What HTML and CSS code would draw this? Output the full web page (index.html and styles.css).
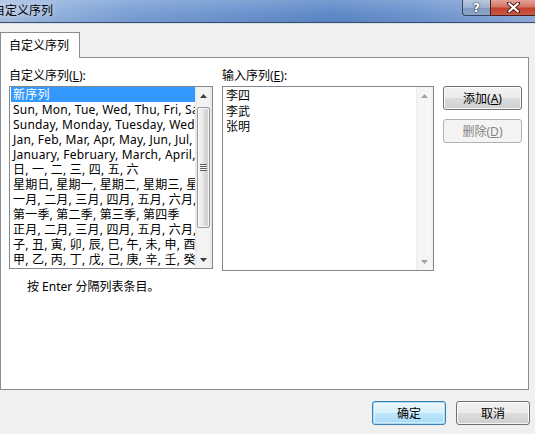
FILE: index.html
```html
<!DOCTYPE html>
<html lang="zh-CN">
<head>
<meta charset="utf-8">
<title>自定义序列</title>
<link rel="stylesheet" href="styles.css">
</head>
<body>
<div class="window">
  <div class="titlebar">
    <span class="title">自定义序列</span>
    <div class="capbtns">
      <div class="cap help">?</div>
      <div class="cap close">
        <svg width="13" height="11" viewBox="0 0 13 11"><path d="M1.5 1 L11.5 10 M11.5 1 L1.5 10" stroke="#4a1d16" stroke-width="4" stroke-linecap="square" fill="none"/><path d="M1.5 1 L11.5 10 M11.5 1 L1.5 10" stroke="#fff" stroke-width="2.2" fill="none"/></svg>
      </div>
    </div>
  </div>
  <div class="client">
    <div class="tabs"><div class="tab">自定义序列</div></div>
    <div class="panel">
      <div class="cols">
        <div class="col col-left">
          <div class="label">自定义序列(<u>L</u>):</div>
          <div class="listbox lb-left">
            <div class="items">
              <div class="item sel">新序列</div>
              <div class="item">Sun, Mon, Tue, Wed, Thu, Fri, Sat</div>
              <div class="item">Sunday, Monday, Tuesday, Wednesday, Thursday</div>
              <div class="item">Jan, Feb, Mar, Apr, May, Jun, Jul, Aug</div>
              <div class="item">January, February, March, April, May</div>
              <div class="item">日, 一, 二, 三, 四, 五, 六</div>
              <div class="item">星期日, 星期一, 星期二, 星期三, 星期四</div>
              <div class="item">一月, 二月, 三月, 四月, 五月, 六月, 七月</div>
              <div class="item">第一季, 第二季, 第三季, 第四季</div>
              <div class="item">正月, 二月, 三月, 四月, 五月, 六月, 七月</div>
              <div class="item">子, 丑, 寅, 卯, 辰, 巳, 午, 未, 申, 酉, 戌, 亥</div>
              <div class="item">甲, 乙, 丙, 丁, 戊, 己, 庚, 辛, 壬, 癸</div>
            </div>
            <div class="vscroll">
              <div class="arrow"><svg width="7" height="4" viewBox="0 0 7 4"><path d="M0 4 L3.5 0 L7 4 Z" fill="#3c3c3c"/></svg></div>
              <div class="track">
                <div class="thumb"><div class="grip"></div></div>
              </div>
              <div class="arrow"><svg width="7" height="4" viewBox="0 0 7 4"><path d="M0 0 L3.5 4 L7 0 Z" fill="#3c3c3c"/></svg></div>
            </div>
          </div>
          <div class="hint">按 Enter 分隔列表条目。</div>
        </div>
        <div class="col col-right">
          <div class="label">输入序列(<u>E</u>):</div>
          <div class="listbox lb-right">
            <div class="edittext">
              <div class="line">李四</div>
              <div class="line">李武</div>
              <div class="line">张明</div>
            </div>
            <div class="vscroll disabled">
              <div class="arrow"><svg width="7" height="4" viewBox="0 0 7 4"><path d="M0 4 L3.5 0 L7 4 Z" fill="#a3a3a3"/></svg></div>
              <div class="track"></div>
              <div class="arrow"><svg width="7" height="4" viewBox="0 0 7 4"><path d="M0 0 L3.5 4 L7 0 Z" fill="#a3a3a3"/></svg></div>
            </div>
          </div>
        </div>
        <div class="col col-btns">
          <div class="btn">添加(<u>A</u>)</div>
          <div class="btn disabled">删除(<u>D</u>)</div>
        </div>
      </div>
    </div>
    <div class="footer">
      <div class="btn default">确定</div>
      <div class="btn">取消</div>
    </div>
  </div>
</div>
</body>
</html>
```
FILE: styles.css
```css
* { box-sizing: border-box; }
html, body { margin: 0; padding: 0; }
body {
  width: 535px;
  height: 434px;
  overflow: hidden;
  background: #f0f0f0;
  color: #000;
  font-family: "Noto Sans", "Noto Sans CJK SC", sans-serif;
  font-size: 12px;
}
u { text-decoration: underline; text-underline-offset: 1px; }

.window {
  width: 535px;
  height: 434px;
  display: flex;
  flex-direction: column;
}

/* title bar */
.titlebar {
  height: 23px;
  flex: none;
  display: flex;
  align-items: flex-start;
  border-bottom: 1px solid #3a4f6c;
  background:
    linear-gradient(to bottom, rgba(255,255,255,0.18) 0%, rgba(255,255,255,0.05) 50%, rgba(0,0,0,0.03) 100%),
    linear-gradient(to right, #a7bfe2 0%, #8fafdc 10%, #779dd4 25%, #6891cd 45%, #5a86c6 62%, #6a92cd 78%, #7d9fd5 90%, #8eacda 100%);
}
.title {
  margin-left: -7px;
  padding-top: 3px;
  line-height: 16px;
  font-size: 12px;
  color: #000;
  text-shadow: 0 0 6px rgba(255,255,255,0.8);
}
.capbtns {
  margin-left: auto;
  display: flex;
  height: 16px;
}
.cap {
  height: 16px;
  display: flex;
  align-items: center;
  justify-content: center;
  border: 1px solid #33465f;
  border-top: none;
}
.help {
  width: 28px;
  border-radius: 0 0 0 4px;
  border-right: none;
  background: linear-gradient(to bottom, #b9c9df 0%, #9cb1cf 50%, #8099bd 51%, #8ea6c8 100%);
  color: #fff;
  font-family: "DejaVu Sans", sans-serif;
  font-weight: bold;
  font-size: 12px;
  line-height: 14px;
  text-shadow: 0 0 2px #1c2d44, 0 0 1px #1c2d44;
}
.close {
  width: 45px;
  border-right: none;
  border-color: #4a1f18;
  background: linear-gradient(to bottom, #e5a297 0%, #d47566 45%, #c2402d 55%, #c95b46 100%);
}

/* client */
.client {
  flex: 1;
  display: flex;
  flex-direction: column;
  border-top: 1px solid #d6dfea;
  padding-top: 8px;
}
.tabs {
  display: flex;
  height: 25px;
  flex: none;
}
.tab {
  position: relative;
  z-index: 1;
  width: 80px;
  height: 26px;
  border: 1px solid #898c95;
  border-bottom: none;
  background: #fff;
  padding: 5px 0 0 8px;
  line-height: 15px;
}
.panel {
  width: 529px;
  height: 333px;
  flex: none;
  border: 1px solid #898c95;
  background: #fff;
  padding: 10px 0 0 8px;
}
.cols {
  display: flex;
  gap: 9px;
  align-items: flex-start;
}
.col { display: flex; flex-direction: column; }
.col-left { width: 204px; }
.col-right { width: 212px; }
.col-btns { width: 79px; padding-top: 18px; gap: 9px; }

.label {
  line-height: 15px;
  height: 15px;
  margin-bottom: 3px;
  white-space: nowrap;
}

.listbox {
  display: flex;
  border: 1px solid #828790;
  background: #fff;
  overflow: hidden;
}
.lb-left { height: 183px; }
.lb-right { height: 185px; }

.items {
  flex: 1;
  min-width: 0;
  overflow: hidden;
  padding-left: 1px;
}
.item {
  height: 15px;
  line-height: 15px;
  padding-left: 2px;
  white-space: nowrap;
  overflow: hidden;
  letter-spacing: 0.2px;
}
.item.sel {
  background: #3399ff;
  color: #fff;
}

.edittext {
  flex: 1;
  padding: 1px 0 0 3px;
}
.line { line-height: 15.5px; height: 15.5px; }

/* scrollbars */
.vscroll {
  width: 17px;
  flex: none;
  display: flex;
  flex-direction: column;
  background: linear-gradient(to right, #e4e4e4 0%, #f2f2f2 15%, #f4f4f4 50%, #f2f2f2 85%, #e6e6e6 100%);
}
.vscroll.disabled {
  background: linear-gradient(to right, #ececec 0%, #f5f5f5 15%, #f6f6f6 85%, #ededed 100%);
}
.arrow {
  height: 17px;
  flex: none;
  display: flex;
  align-items: center;
  justify-content: center;
}
.track {
  flex: 1;
  display: flex;
  flex-direction: column;
}
.thumb {
  margin: 3px 2px 0 2px;
  height: 121px;
  border: 1px solid #979797;
  border-radius: 2px;
  background: linear-gradient(to right, #f3f3f3 0%, #ebebeb 45%, #dbdbdb 55%, #cfcfcf 100%);
  box-shadow: inset 0 0 0 1px rgba(255,255,255,0.75);
  display: flex;
  align-items: center;
  justify-content: center;
}
.grip {
  width: 7px;
  height: 7px;
  background: repeating-linear-gradient(to bottom, #5f5f5f 0px, #5f5f5f 1px, #f6f6f6 1px, #f6f6f6 2px);
}

.hint {
  margin-top: 10px;
  padding-left: 18px;
  line-height: 15px;
  white-space: nowrap;
}

/* buttons */
.btn {
  height: 24px;
  border: 1px solid #707070;
  border-radius: 3px;
  background: linear-gradient(to bottom, #f2f2f2 0%, #ebebeb 48%, #dddddd 52%, #cfcfcf 100%);
  box-shadow: inset 0 0 0 1px rgba(255,255,255,0.8);
  display: flex;
  align-items: center;
  justify-content: center;
  line-height: 15px;
  white-space: nowrap;
}
.btn.disabled {
  border-color: #adb2b5;
  background: #f4f4f4;
  box-shadow: none;
  color: #838383;
}
.btn.default {
  border-color: #3c7fb1;
  box-shadow: inset 0 0 0 1px #a8dcf5, inset 0 0 0 2px rgba(255,255,255,0.5);
  background: linear-gradient(to bottom, #eaf6fd 0%, #d9f0fc 48%, #bee6fd 52%, #a7d9f5 100%);
}

.footer {
  display: flex;
  justify-content: flex-end;
  gap: 10px;
  padding: 11px 5px 0 0;
}
.footer .btn { width: 74px; }
```
